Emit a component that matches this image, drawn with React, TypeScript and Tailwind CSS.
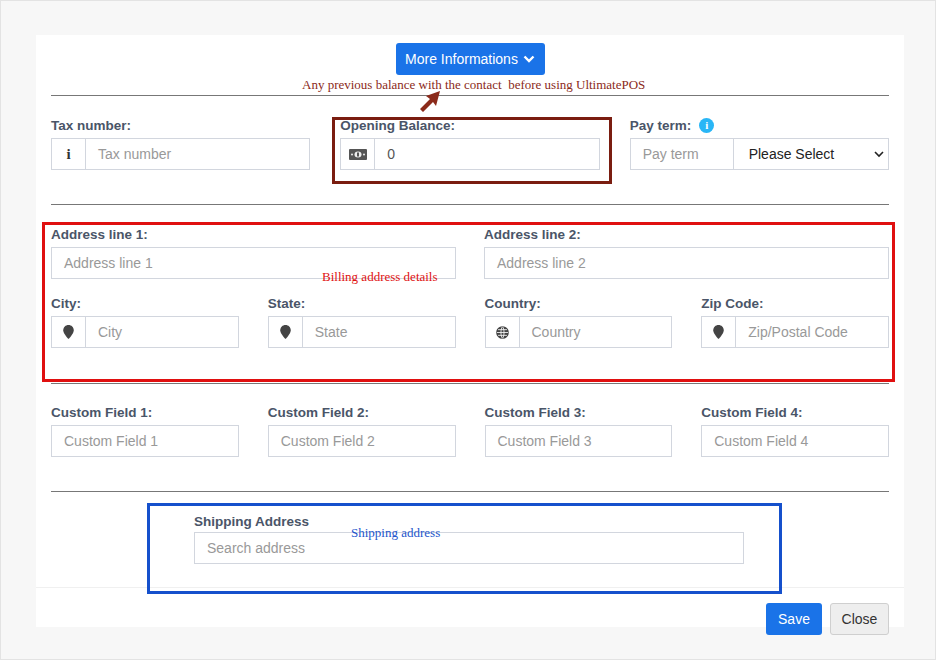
import React from "react";

const F = { fontFamily: '"Liberation Sans", Arial, sans-serif' };
const SERIF = { fontFamily: '"Liberation Serif", "Times New Roman", serif' };

function Label({ children }: { children: React.ReactNode }) {
  return <div className="text-[13.5px] font-bold text-[#4a5568] h-[15px] leading-[15px] mb-[5px]">{children}</div>;
}

function Pin() {
  return (
    <svg width="11" height="14" viewBox="0 0 12 16"><path d="M6 0C2.7 0 0 2.6 0 5.9 0 10 6 16 6 16s6-6 6-10.1C12 2.6 9.3 0 6 0z" fill="#444" /></svg>
  );
}
function Globe() {
  return (
    <svg width="13" height="13" viewBox="0 0 16 16" fill="none" stroke="#444" strokeWidth="1.6"><circle cx="8" cy="8" r="7" fill="#444" /><path d="M1 8h14M8 1c-2.5 2-2.5 12 0 14M8 1c2.5 2 2.5 12 0 14M2.5 4.5h11M2.5 11.5h11" stroke="#fff" strokeWidth="1" /></svg>
  );
}

function AddonInput({ icon, placeholder, value }: { icon: React.ReactNode; placeholder?: string; value?: string }) {
  return (
    <div className="flex h-[32px] border border-[#d2d6de] bg-white">
      <div className="w-[34px] flex items-center justify-center border-r border-[#d2d6de] shrink-0">{icon}</div>
      <div className={`flex-1 flex items-center px-[12px] text-[14px] ${value ? "text-[#555]" : "text-[#999]"}`}>{value ?? placeholder}</div>
    </div>
  );
}
function Input({ placeholder }: { placeholder: string }) {
  return (
    <div className="flex h-[32px] items-center border border-[#d2d6de] bg-white px-[12px] text-[14px] text-[#999]">{placeholder}</div>
  );
}

export default function App() {
  return (
    <div style={F} className="w-[936px] h-[660px] bg-[#f7f7f7] border border-[#e3e3e3] relative overflow-hidden">
      <div className="absolute left-[35px] top-[34px] w-[868px] h-[592px] bg-white">
        <div className="px-[15px] relative h-[552px]">
          <div className="flex justify-center pt-[8px]">
            <div className="h-[32px] w-[149px] bg-[#1a73e8] rounded-[3px] text-white text-[14px] flex items-center justify-center gap-[5px]">
              More Informations
              <svg width="12" height="10" viewBox="0 0 12 10"><path d="M1.5 2.5 6 7l4.5-4.5" stroke="#fff" strokeWidth="2.4" fill="none" /></svg>
            </div>
          </div>
          <div className="h-[20px]" />
          <div className="border-t border-[#777]" />
          {/* row 1 */}
          <div className="grid grid-cols-3 gap-x-[30px] mt-[22px]">
            <div>
              <Label>Tax number:</Label>
              <AddonInput icon={<span className="text-[#333] font-bold text-[15px]" style={SERIF}>i</span>} placeholder="Tax number" />
            </div>
            <div>
              <Label>Opening Balance:</Label>
              <AddonInput icon={<svg width="18" height="11" viewBox="0 0 18 11"><rect width="18" height="11" rx="1" fill="#555" /><ellipse cx="9" cy="5.5" rx="3.5" ry="3" fill="#eee" /><rect x="8" y="3.5" width="2" height="4" fill="#555"/><circle cx="3" cy="5.5" r="1" fill="#eee"/><circle cx="15" cy="5.5" r="1" fill="#eee"/></svg>} value="0" />
            </div>
            <div>
              <Label>
                <span className="flex items-center gap-[8px]">Pay term:
                  <span className="w-[15px] h-[15px] rounded-full bg-[#29b6f6] text-white text-[11px] font-bold flex items-center justify-center" style={SERIF}>i</span>
                </span>
              </Label>
              <div className="flex h-[32px]">
                <div className="w-[104px] border border-[#d2d6de] flex items-center px-[12px] text-[14px] text-[#999]">Pay term</div>
                <div className="flex-1 border border-l-0 border-[#d2d6de] flex items-center justify-between pl-[15px] pr-[4px] text-[14px] text-[#222]">
                  Please Select
                  <svg width="10" height="8" viewBox="0 0 10 8"><path d="M1 2l4 4 4-4" stroke="#222" strokeWidth="1.6" fill="none" /></svg>
                </div>
              </div>
            </div>
          </div>
          <div className="border-t border-[#777] mt-[34px]" />
          {/* address */}
          <div className="grid grid-cols-2 gap-x-[28px] mt-[22px]">
            <div><Label>Address line 1:</Label><Input placeholder="Address line 1" /></div>
            <div><Label>Address line 2:</Label><Input placeholder="Address line 2" /></div>
          </div>
          <div className="grid grid-cols-4 gap-x-[29px] mt-[17px]">
            <div><Label>City:</Label><AddonInput icon={<Pin />} placeholder="City" /></div>
            <div><Label>State:</Label><AddonInput icon={<Pin />} placeholder="State" /></div>
            <div><Label>Country:</Label><AddonInput icon={<Globe />} placeholder="Country" /></div>
            <div><Label>Zip Code:</Label><AddonInput icon={<Pin />} placeholder="Zip/Postal Code" /></div>
          </div>
          <div className="border-t border-[#777] mt-[35px]" />
          <div className="grid grid-cols-4 gap-x-[29px] mt-[21px]">
            <div><Label>Custom Field 1:</Label><Input placeholder="Custom Field 1" /></div>
            <div><Label>Custom Field 2:</Label><Input placeholder="Custom Field 2" /></div>
            <div><Label>Custom Field 3:</Label><Input placeholder="Custom Field 3" /></div>
            <div><Label>Custom Field 4:</Label><Input placeholder="Custom Field 4" /></div>
          </div>
          <div className="border-t border-[#777] mt-[34px]" />
          <div className="ml-[143px] w-[550px] mt-[22px]">
            <div className="text-[13.5px] font-bold text-[#4a5568] h-[15px] leading-[15px] mb-[3px]">Shipping Address</div>
            <Input placeholder="Search address" />
          </div>

          {/* annotations */}
          <div className="absolute left-[266px] top-[40px] text-[13px] text-[#8b2a1a] whitespace-pre" style={SERIF}>Any previous balance with the contact  before using UltimatePOS</div>
          <svg className="absolute left-[382px] top-[55px]" width="24" height="24" viewBox="0 0 24 24"><path d="M22 1 L8 6 L12 9 L2 19 L5 22 L15 12 L18 16 Z" fill="#8b2a1a" /></svg>
          <div className="absolute left-[296px] top-[82px] w-[280px] h-[67px] border-[3px] border-[#7a1d10]" />
          <div className="absolute left-[6px] top-[187px] w-[853px] h-[160px] border-[3px] border-[#e01010]" />
          <div className="absolute left-[286px] top-[232px] text-[13px] text-[#e01010]" style={SERIF}>Billing address details</div>
          <div className="absolute left-[111px] top-[468px] w-[635px] h-[91px] border-[3px] border-[#1550cc]" />
          <div className="absolute left-[315px] top-[488px] text-[13px] text-[#2255cc]" style={SERIF}>Shipping address</div>
        </div>
        <div className="border-t border-[#f0f0f0] flex justify-end gap-[8px] pr-[15px] pt-[15px]">
          <div className="h-[32px] w-[56px] bg-[#1a73e8] rounded-[3px] text-white text-[14px] flex items-center justify-center">Save</div>
          <div className="h-[32px] w-[59px] bg-[#eeeeee] border border-[#cfcfcf] rounded-[3px] text-[#333] text-[14px] flex items-center justify-center">Close</div>
        </div>
      </div>
    </div>
  );
}
